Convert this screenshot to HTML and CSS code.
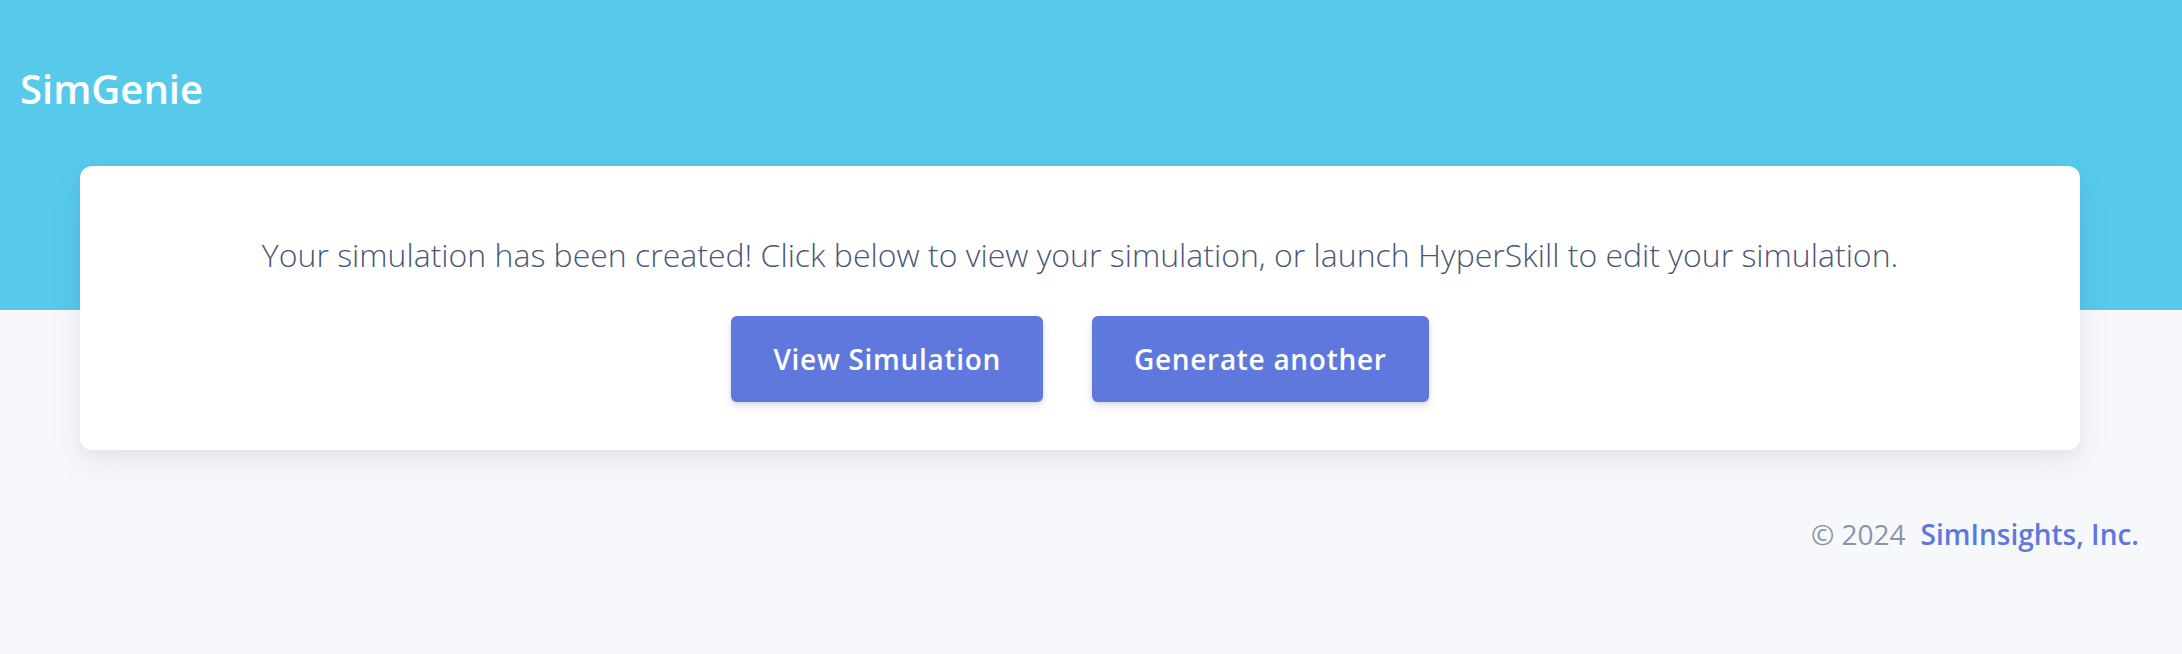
FILE: index.html
```html
<!DOCTYPE html>
<html lang="en">
<head>
<meta charset="utf-8">
<title>SimGenie</title>
<link rel="stylesheet" href="styles.css">
</head>
<body>
<header class="hero">
  <div class="topline"></div>
  <nav class="brand-bar">
    <span class="brand">SimGenie</span>
  </nav>
</header>
<main class="content">
  <section class="card">
    <p class="message">Your simulation has been created! Click below to view your simulation, or launch HyperSkill to edit your simulation.</p>
    <div class="actions">
      <button class="btn">View Simulation</button>
      <button class="btn">Generate another</button>
    </div>
  </section>
</main>
<footer class="footer">
  <span class="copy">© 2024</span>
  <a class="company" href="#">SimInsights, Inc.</a>
</footer>
</body>
</html>
```
FILE: styles.css
```css
* { box-sizing: border-box; }
html, body { margin: 0; padding: 0; }
body {
  background: #f7f8fc;
  font-family: "Open Sans", "Noto Sans", sans-serif;
  height: 654px;
  overflow: hidden;
}
.hero {
  background: #57caeb;
  height: 310px;
  padding-top: 8px;
}
.topline {
  height: 1px;
  background: #5fcdee;
}
.brand-bar {
  padding: 56px 20px 0;
}
.brand {
  color: #ffffff;
  font-weight: 600;
  font-size: 40px;
  line-height: 48px;
  display: block;
}
.content {
  padding: 0 102px 0 80px;
  margin-top: -144px;
}
.card {
  background: #ffffff;
  border-radius: 12px;
  height: 284px;
  box-shadow: 0 15px 35px rgba(50, 50, 93, 0.07), 0 5px 15px rgba(0, 0, 0, 0.04);
  display: flex;
  flex-direction: column;
  align-items: center;
  padding-top: 67px;
}
.message {
  margin: 0;
  color: #4a5677;
  font-weight: 300;
  font-size: 32px;
  line-height: 44px;
}
.actions {
  display: flex;
  gap: 49px;
  margin-top: 39px;
}
.btn {
  background: #5f78dd;
  color: #ffffff;
  border: none;
  border-radius: 6px;
  height: 86px;
  padding: 0 42px;
  font-family: "Open Sans", "Noto Sans", sans-serif;
  font-weight: 600;
  font-size: 28px;
  letter-spacing: 0.025em;
  box-shadow: 0 4px 8px rgba(50, 50, 93, 0.14), 0 1px 3px rgba(0, 0, 0, 0.08);
}
.footer {
  display: flex;
  justify-content: flex-end;
  align-items: baseline;
  gap: 15px;
  padding: 66px 43px 0 0;
  font-size: 28px;
  line-height: 36px;
}
.copy {
  color: #8a95a8;
}
.company {
  color: #5f78dd;
  font-weight: 600;
  text-decoration: none;
}
```
